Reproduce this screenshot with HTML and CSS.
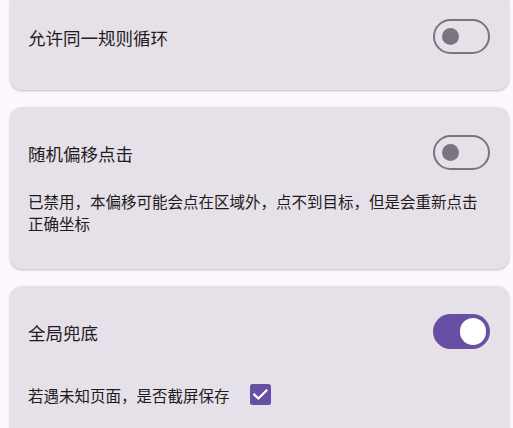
FILE: index.html
```html
<!DOCTYPE html>
<html lang="zh-CN">
<head>
<meta charset="utf-8">
<link rel="stylesheet" href="styles.css">
</head>
<body>
<div class="list">
  <section class="card card-first">
    <div class="row">
      <span class="title">允许同一规则循环</span>
      <span class="switch"><span class="thumb"></span></span>
    </div>
  </section>
  <section class="card card-desc">
    <div class="row">
      <span class="title">随机偏移点击</span>
      <span class="switch"><span class="thumb"></span></span>
    </div>
    <p class="desc">已禁用，本偏移可能会点在区域外，点不到目标，但是会重新点击正确坐标</p>
  </section>
  <section class="card">
    <div class="row">
      <span class="title">全局兜底</span>
      <span class="switch on"><span class="thumb"></span></span>
    </div>
    <div class="check-row">
      <span class="label">若遇未知页面，是否截屏保存</span>
      <span class="checkbox">
        <svg viewBox="0 0 21 21" width="21" height="21"><path d="M4.3 10.6 L8.4 14.5 L16.4 6.6" fill="none" stroke="#fff" stroke-width="2.3" stroke-linecap="square"/></svg>
      </span>
    </div>
  </section>
</div>
</body>
</html>
```

FILE: styles.css
```css
html, body {
  margin: 0;
  padding: 0;
  background: #fef7ff;
  font-family: "Noto Sans CJK SC", "Noto Sans", sans-serif;
  font-weight: 400;
  color: #1d1b20;
  overflow: hidden;
}

.list {
  display: flex;
  flex-direction: column;
  gap: 17px;
  padding: 0 4px 0 10px;
}

.card {
  background: #e6e0e9;
  border-radius: 12px;
  box-shadow: 0 1px 3px rgba(0, 0, 0, 0.16), 0 1px 2px rgba(0, 0, 0, 0.1);
  padding: 19px 19px 27px 18px;
}

.card-first {
  margin-top: -8px;
  padding-top: 18px;
}

.card-desc {
  padding-bottom: 35px;
}

.row {
  display: flex;
  align-items: center;
  justify-content: space-between;
  min-height: 53px;
}

.title {
  font-size: 17.5px;
  line-height: 24px;
  padding-top: 3px;
}

.switch {
  box-sizing: border-box;
  width: 57.5px;
  height: 35px;
  border: 2.2px solid #79747e;
  border-radius: 18px;
  display: flex;
  align-items: center;
  padding-left: 7px;
  flex-shrink: 0;
}

.switch .thumb {
  width: 17.5px;
  height: 17.5px;
  border-radius: 50%;
  background: #79747e;
}

.switch.on {
  border: none;
  background: #6750a4;
  justify-content: flex-end;
  padding: 0 4px 0 0;
}

.switch.on .thumb {
  width: 26.5px;
  height: 26.5px;
  background: #ffffff;
}

.desc {
  margin: 11px 0 0;
  font-size: 15.5px;
  line-height: 22px;
}

.check-row {
  display: flex;
  align-items: center;
  gap: 20px;
  min-height: 52px;
  margin-top: 10px;
}

.label {
  font-size: 15.5px;
  line-height: 22px;
  padding-top: 2px;
}

.checkbox {
  width: 21px;
  height: 21px;
  border-radius: 2.5px;
  background: #6750a4;
  display: flex;
  align-items: center;
  justify-content: center;
}

.checkbox svg {
  display: block;
}
```
